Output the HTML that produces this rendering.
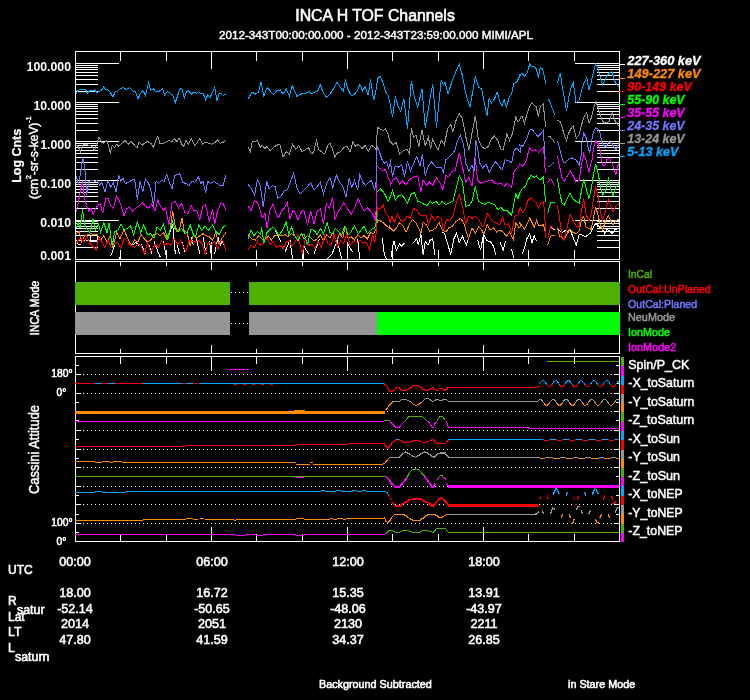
<!DOCTYPE html>
<html><head><meta charset="utf-8"><title>INCA H TOF Channels</title>
<style>
html,body{margin:0;padding:0;background:#000;}
body{width:750px;height:700px;overflow:hidden;}
svg{display:block;font-family:"Liberation Sans",sans-serif;will-change:transform;}
svg rect{shape-rendering:crispEdges;}
</style></head><body>
<svg width="750" height="700" viewBox="0 0 750 700">
<text x="295.3" y="21" font-size="16.4" text-anchor="start" fill="#fff" stroke="#fff" stroke-width="0.6" font-weight="normal" font-style="normal" id="title" textLength="159.5" lengthAdjust="spacingAndGlyphs">INCA H TOF Channels</text>
<text x="219" y="38.5" font-size="11.5" text-anchor="start" fill="#fff" stroke="#fff" stroke-width="0.45" font-weight="normal" font-style="normal" id="subtitle" textLength="314" lengthAdjust="spacingAndGlyphs">2012-343T00:00:00.000 - 2012-343T23:59:00.000 MIMI/APL</text>
<rect x="75" y="51" width="545" height="1" fill="#fff"/>
<rect x="75" y="259" width="545" height="1" fill="#fff"/>
<rect x="75" y="51" width="1" height="209" fill="#fff"/>
<rect x="619" y="51" width="1" height="209" fill="#fff"/>
<rect x="120" y="51" width="1" height="10" fill="#fff"/>
<rect x="120" y="250" width="1" height="10" fill="#fff"/>
<rect x="166" y="51" width="1" height="10" fill="#fff"/>
<rect x="166" y="250" width="1" height="10" fill="#fff"/>
<rect x="211" y="51" width="1" height="18" fill="#fff"/>
<rect x="211" y="242" width="1" height="18" fill="#fff"/>
<rect x="256" y="51" width="1" height="10" fill="#fff"/>
<rect x="256" y="250" width="1" height="10" fill="#fff"/>
<rect x="302" y="51" width="1" height="10" fill="#fff"/>
<rect x="302" y="250" width="1" height="10" fill="#fff"/>
<rect x="347" y="51" width="1" height="18" fill="#fff"/>
<rect x="347" y="242" width="1" height="18" fill="#fff"/>
<rect x="392" y="51" width="1" height="10" fill="#fff"/>
<rect x="392" y="250" width="1" height="10" fill="#fff"/>
<rect x="438" y="51" width="1" height="10" fill="#fff"/>
<rect x="438" y="250" width="1" height="10" fill="#fff"/>
<rect x="483" y="51" width="1" height="18" fill="#fff"/>
<rect x="483" y="242" width="1" height="18" fill="#fff"/>
<rect x="528" y="51" width="1" height="10" fill="#fff"/>
<rect x="528" y="250" width="1" height="10" fill="#fff"/>
<rect x="574" y="51" width="1" height="10" fill="#fff"/>
<rect x="574" y="250" width="1" height="10" fill="#fff"/>
<rect x="75" y="63" width="44" height="1" fill="#fff"/>
<rect x="575" y="63" width="44" height="1" fill="#fff"/>
<rect x="75" y="91" width="23" height="1" fill="#fff"/>
<rect x="597" y="91" width="22" height="1" fill="#fff"/>
<rect x="75" y="84" width="23" height="1" fill="#fff"/>
<rect x="597" y="84" width="22" height="1" fill="#fff"/>
<rect x="75" y="79" width="23" height="1" fill="#fff"/>
<rect x="597" y="79" width="22" height="1" fill="#fff"/>
<rect x="75" y="75" width="23" height="1" fill="#fff"/>
<rect x="597" y="75" width="22" height="1" fill="#fff"/>
<rect x="75" y="72" width="23" height="1" fill="#fff"/>
<rect x="597" y="72" width="22" height="1" fill="#fff"/>
<rect x="75" y="69" width="23" height="1" fill="#fff"/>
<rect x="597" y="69" width="22" height="1" fill="#fff"/>
<rect x="75" y="67" width="23" height="1" fill="#fff"/>
<rect x="597" y="67" width="22" height="1" fill="#fff"/>
<rect x="75" y="65" width="23" height="1" fill="#fff"/>
<rect x="597" y="65" width="22" height="1" fill="#fff"/>
<rect x="75" y="102" width="44" height="1" fill="#fff"/>
<rect x="575" y="102" width="44" height="1" fill="#fff"/>
<rect x="75" y="130" width="23" height="1" fill="#fff"/>
<rect x="597" y="130" width="22" height="1" fill="#fff"/>
<rect x="75" y="123" width="23" height="1" fill="#fff"/>
<rect x="597" y="123" width="22" height="1" fill="#fff"/>
<rect x="75" y="118" width="23" height="1" fill="#fff"/>
<rect x="597" y="118" width="22" height="1" fill="#fff"/>
<rect x="75" y="114" width="23" height="1" fill="#fff"/>
<rect x="597" y="114" width="22" height="1" fill="#fff"/>
<rect x="75" y="111" width="23" height="1" fill="#fff"/>
<rect x="597" y="111" width="22" height="1" fill="#fff"/>
<rect x="75" y="108" width="23" height="1" fill="#fff"/>
<rect x="597" y="108" width="22" height="1" fill="#fff"/>
<rect x="75" y="106" width="23" height="1" fill="#fff"/>
<rect x="597" y="106" width="22" height="1" fill="#fff"/>
<rect x="75" y="104" width="23" height="1" fill="#fff"/>
<rect x="597" y="104" width="22" height="1" fill="#fff"/>
<rect x="75" y="141" width="44" height="1" fill="#fff"/>
<rect x="575" y="141" width="44" height="1" fill="#fff"/>
<rect x="75" y="169" width="23" height="1" fill="#fff"/>
<rect x="597" y="169" width="22" height="1" fill="#fff"/>
<rect x="75" y="162" width="23" height="1" fill="#fff"/>
<rect x="597" y="162" width="22" height="1" fill="#fff"/>
<rect x="75" y="157" width="23" height="1" fill="#fff"/>
<rect x="597" y="157" width="22" height="1" fill="#fff"/>
<rect x="75" y="153" width="23" height="1" fill="#fff"/>
<rect x="597" y="153" width="22" height="1" fill="#fff"/>
<rect x="75" y="150" width="23" height="1" fill="#fff"/>
<rect x="597" y="150" width="22" height="1" fill="#fff"/>
<rect x="75" y="147" width="23" height="1" fill="#fff"/>
<rect x="597" y="147" width="22" height="1" fill="#fff"/>
<rect x="75" y="145" width="23" height="1" fill="#fff"/>
<rect x="597" y="145" width="22" height="1" fill="#fff"/>
<rect x="75" y="143" width="23" height="1" fill="#fff"/>
<rect x="597" y="143" width="22" height="1" fill="#fff"/>
<rect x="75" y="180" width="44" height="1" fill="#fff"/>
<rect x="575" y="180" width="44" height="1" fill="#fff"/>
<rect x="75" y="208" width="23" height="1" fill="#fff"/>
<rect x="597" y="208" width="22" height="1" fill="#fff"/>
<rect x="75" y="201" width="23" height="1" fill="#fff"/>
<rect x="597" y="201" width="22" height="1" fill="#fff"/>
<rect x="75" y="196" width="23" height="1" fill="#fff"/>
<rect x="597" y="196" width="22" height="1" fill="#fff"/>
<rect x="75" y="192" width="23" height="1" fill="#fff"/>
<rect x="597" y="192" width="22" height="1" fill="#fff"/>
<rect x="75" y="189" width="23" height="1" fill="#fff"/>
<rect x="597" y="189" width="22" height="1" fill="#fff"/>
<rect x="75" y="186" width="23" height="1" fill="#fff"/>
<rect x="597" y="186" width="22" height="1" fill="#fff"/>
<rect x="75" y="184" width="23" height="1" fill="#fff"/>
<rect x="597" y="184" width="22" height="1" fill="#fff"/>
<rect x="75" y="182" width="23" height="1" fill="#fff"/>
<rect x="597" y="182" width="22" height="1" fill="#fff"/>
<rect x="75" y="220" width="44" height="1" fill="#fff"/>
<rect x="575" y="220" width="44" height="1" fill="#fff"/>
<rect x="75" y="247" width="23" height="1" fill="#fff"/>
<rect x="597" y="247" width="22" height="1" fill="#fff"/>
<rect x="75" y="240" width="23" height="1" fill="#fff"/>
<rect x="597" y="240" width="22" height="1" fill="#fff"/>
<rect x="75" y="235" width="23" height="1" fill="#fff"/>
<rect x="597" y="235" width="22" height="1" fill="#fff"/>
<rect x="75" y="231" width="23" height="1" fill="#fff"/>
<rect x="597" y="231" width="22" height="1" fill="#fff"/>
<rect x="75" y="228" width="23" height="1" fill="#fff"/>
<rect x="597" y="228" width="22" height="1" fill="#fff"/>
<rect x="75" y="226" width="23" height="1" fill="#fff"/>
<rect x="597" y="226" width="22" height="1" fill="#fff"/>
<rect x="75" y="223" width="23" height="1" fill="#fff"/>
<rect x="597" y="223" width="22" height="1" fill="#fff"/>
<rect x="75" y="221" width="23" height="1" fill="#fff"/>
<rect x="597" y="221" width="22" height="1" fill="#fff"/>
<text x="71" y="70.7" font-size="12.3" text-anchor="end" fill="#fff" font-weight="bold" font-style="normal" >100.000</text>
<text x="71" y="109.75" font-size="12.3" text-anchor="end" fill="#fff" font-weight="bold" font-style="normal" >10.000</text>
<text x="71" y="148.79999999999998" font-size="12.3" text-anchor="end" fill="#fff" font-weight="bold" font-style="normal" >1.000</text>
<text x="71" y="187.85" font-size="12.3" text-anchor="end" fill="#fff" font-weight="bold" font-style="normal" >0.100</text>
<text x="71" y="226.9" font-size="12.3" text-anchor="end" fill="#fff" font-weight="bold" font-style="normal" >0.010</text>
<text x="71" y="260" font-size="12.3" text-anchor="end" fill="#fff" font-weight="bold" font-style="normal" >0.001</text>
<text transform="translate(20.6,182.8) rotate(-90)" font-size="13.4" fill="#fff" stroke="#fff" stroke-width="0.25" font-weight="bold" textLength="54" lengthAdjust="spacingAndGlyphs">Log Cnts</text>
<text transform="translate(38,199) rotate(-90)" font-size="12.2" fill="#fff" stroke="#fff" stroke-width="0.4" textLength="82.5" lengthAdjust="spacingAndGlyphs">(cm<tspan font-size="7" dy="-7">2</tspan><tspan dy="7">-sr-s-keV)</tspan><tspan font-size="7" dy="-7">-1</tspan></text>
<rect x="619" y="64" width="6" height="1" fill="#ffffff"/>
<text x="627.3" y="64.8" font-size="12.4" text-anchor="start" fill="#ffffff" stroke="#ffffff" stroke-width="0.3" font-weight="bold" font-style="italic" textLength="73.3" lengthAdjust="spacingAndGlyphs">227-360 keV</text>
<rect x="619" y="78" width="6" height="1" fill="#ff8c00"/>
<text x="627.3" y="77.9" font-size="12.4" text-anchor="start" fill="#ff8c00" stroke="#ff8c00" stroke-width="0.3" font-weight="bold" font-style="italic" textLength="73.3" lengthAdjust="spacingAndGlyphs">149-227 keV</text>
<rect x="619" y="91" width="6" height="1" fill="#ff0000"/>
<text x="627.3" y="91.0" font-size="12.4" text-anchor="start" fill="#ff0000" stroke="#ff0000" stroke-width="0.3" font-weight="bold" font-style="italic" textLength="64.4" lengthAdjust="spacingAndGlyphs">90-149 keV</text>
<rect x="619" y="104" width="6" height="1" fill="#00ff00"/>
<text x="627.3" y="104.0" font-size="12.4" text-anchor="start" fill="#00ff00" stroke="#00ff00" stroke-width="0.3" font-weight="bold" font-style="italic" textLength="57.3" lengthAdjust="spacingAndGlyphs">55-90 keV</text>
<rect x="619" y="117" width="6" height="1" fill="#ff00ff"/>
<text x="627.3" y="117.1" font-size="12.4" text-anchor="start" fill="#ff00ff" stroke="#ff00ff" stroke-width="0.3" font-weight="bold" font-style="italic" textLength="57.3" lengthAdjust="spacingAndGlyphs">35-55 keV</text>
<rect x="619" y="130" width="6" height="1" fill="#7078ff"/>
<text x="627.3" y="130.2" font-size="12.4" text-anchor="start" fill="#7078ff" stroke="#7078ff" stroke-width="0.3" font-weight="bold" font-style="italic" textLength="57.3" lengthAdjust="spacingAndGlyphs">24-35 keV</text>
<rect x="619" y="143" width="6" height="1" fill="#969696"/>
<text x="627.3" y="143.3" font-size="12.4" text-anchor="start" fill="#969696" stroke="#969696" stroke-width="0.3" font-weight="bold" font-style="italic" textLength="57.3" lengthAdjust="spacingAndGlyphs">13-24 keV</text>
<rect x="619" y="156" width="6" height="1" fill="#00a8ff"/>
<text x="627.3" y="156.4" font-size="12.4" text-anchor="start" fill="#00a8ff" stroke="#00a8ff" stroke-width="0.3" font-weight="bold" font-style="italic" textLength="51" lengthAdjust="spacingAndGlyphs">5-13 keV</text>
<clipPath id="c1"><rect x="76" y="52" width="543" height="207"/></clipPath>
<g clip-path="url(#c1)" fill="none" stroke-width="1" stroke-linejoin="miter" shape-rendering="crispEdges">
<polyline stroke="#ffffff" points="76.9,243.4 79.1,244.9 81,244.5"/>
<polyline stroke="#ffffff" points="90.6,241.5 90.6,235.5 97.4,235.5 97.4,241.5 91,241.5"/>
<polyline stroke="#ffffff" points="110.2,256 112.3,252.8 114.5,245.3"/>
<polyline stroke="#ffffff" points="119.8,259.2 120.9,249.6"/>
<polyline stroke="#ffffff" points="132.6,245.3 135.8,242.1 139,245.3"/>
<polyline stroke="#ffffff" points="141.1,244.3 145.4,253.9"/>
<polyline stroke="#ffffff" points="148.6,244.3 151.8,253.9"/>
<polyline stroke="#ffffff" points="153.9,241.1 157.1,249.6 160.3,257.1"/>
<polyline stroke="#ffffff" points="163.5,241.1 166.7,259.2"/>
<polyline stroke="#ffffff" points="169.9,232.5 172.7,224 175.3,253.9"/>
<polyline stroke="#ffffff" points="177.4,245.3 179.5,253.9"/>
<polyline stroke="#ffffff" points="181.7,241.1 184.9,251.7"/>
<polyline stroke="#ffffff" points="191.3,236.8 193.4,245.3"/>
<polyline stroke="#ffffff" points="196.6,238.9 199.8,253.9"/>
<polyline stroke="#ffffff" points="203,236.8 206.2,253.9"/>
<polyline stroke="#ffffff" points="209.4,241.1 211.5,256"/>
<polyline stroke="#ffffff" points="214.7,253.9 217.9,236.8 220.1,245.3 222.2,241.1 224.3,245.3"/>
<polyline stroke="#ffffff" points="256.3,259.2 256.3,249.6"/>
<polyline stroke="#ffffff" points="275.5,231.5 277.7,234.7 280.9,242.1"/>
<polyline stroke="#ffffff" points="285.1,251.7 290,240 292.6,259.2"/>
<polyline stroke="#ffffff" points="303.3,259.2 303.3,245.3 308.6,253.9"/>
<polyline stroke="#ffffff" points="313.9,253.9 317.1,245.3 319.3,238.9"/>
<polyline stroke="#ffffff" points="326.7,259.2 332.1,253.9 335.3,245.3 337.4,241.1 341.7,259.2"/>
<polyline stroke="#ffffff" points="347,259.2 348.1,244.3 352.3,251.7"/>
<polyline stroke="#ffffff" points="357.7,238.9 359.8,259.2"/>
<polyline stroke="#ffffff" points="382.2,237.9 384.3,253.9 386.5,259.2"/>
<polyline stroke="#ffffff" points="391.1,256.7 393.8,240.7 396.4,250.3 399.6,243.9 401.7,246 404.5,242.8"/>
<polyline stroke="#ffffff" points="413.5,242.8 416.7,238.5 418.2,244.9 420.9,234.3 423.1,254.5 425.2,241.7 428,244.9 430.5,239.6 432.7,238.5 434.8,254.5"/>
<polyline stroke="#ffffff" points="438,250.3 438.6,260.1"/>
<polyline stroke="#ffffff" points="442.3,232.1 444.4,233.2 447.6,243.9 450.8,254.5 454,238.5 456.6,233.2 459.3,242.8 462.5,236.4 466.4,244.9 468.5,238.5"/>
<polyline stroke="#ffffff" points="477.5,239.6 480.7,250.3 483.4,234.3 483.9,260.1"/>
<polyline stroke="#ffffff" points="483.9,235.3 487.1,240.7 490.3,241.7 493.5,246 495.6,254.5"/>
<polyline stroke="#ffffff" points="499.9,241.7 503.1,250.3 505.6,240.7"/>
<polyline stroke="#ffffff" points="511.6,249.2 513.7,257.7"/>
<polyline stroke="#ffffff" points="522.2,254 524.5,248 526.7,239 529.7,233.7 532,242.7 534.2,236 536.5,241.2"/>
<polyline stroke="#ffffff" points="550.7,227 554.5,230"/>
<polyline stroke="#ffffff" points="557.5,229.2 559.7,230.7 562.7,232.2 565,230.7 567.2,231.5 570.2,229.2 572.5,236 576.2,245 579.2,234.5 581.5,234.5 583.7,236 586.7,236 590.5,233 593.5,227 595.7,223.2 598,225.5 600.2,227.7 602.5,228.5 604.7,233.7 607,229.2 610,231.5 612.2,233.7 614.5,230 616.7,229.2 619,228.5"/>
<polyline stroke="#ff8c00" points="76.1,233.6 79.3,231.5 81.4,242.1 84.6,235.7 87.8,234.7 91,233.6 94.2,234.7 97.4,234.7 100.6,240 103.8,235.7 107,242.1 110.2,235.7 113.4,245.3 116.6,232.5 119.8,238.9 124.1,229.3 127.3,237.9 131.5,245.3 134.7,240 137.9,242.1 141.1,234.7 144.3,238.9 147.5,242.1 150.7,240 153.9,234.7 157.1,233.6 160.3,235.7 163.5,232.5 166.7,238.9 169.9,230.4 172.7,211.2 174.8,224 177,231.5 179.5,229.3 182.1,217.6 184.2,231.5 187,232.5 190.2,245.3 193.4,234.7 196.6,237.9 199.8,235.7 203,233.6 206.2,235.7 209.4,236.8 212.6,240 215.8,232.5 219,244.3 222.2,237.9 225.8,232.5"/>
<polyline stroke="#ff8c00" points="248.2,234.7 251.6,238.9 255.3,240 258.5,235.7 261.7,238.9 264.9,241.1 268.1,235.7 271.3,240 274.5,235.7 277.7,234.7 280.9,235.7 285.1,234.7 288.3,236.8 291.5,233.6 294.7,235.7 297.9,241.1 301.1,233.6 304.3,238.9 307.5,235.7 310.7,237.9 313.9,241.1 317.1,238.9 320.3,234.7 323.5,241.1 326.7,234.7 329.9,237.9 333.1,232.5 336.3,242.1 339.5,233.6 342.7,237.9 345.5,226.1 348.1,237.9 351.3,236.8 354.5,240 357.7,234.7 360.9,237.9 364.1,235.7 367.3,238.9 370.5,232.5 373.7,233.6 376.2,228.3 377.5,219.7 380.1,220.8 383.3,222.9 386.5,226.1 390.1,228.3 390,226.8 393.2,231.1 396.4,227.9 399.6,222.5 402.8,225.7 406,232.1 409.2,224.7 412.4,219.3 415.6,222.5 418.8,228.9 420.9,233.2 423.1,222.5 426.3,224.7 429.5,231.1 432.7,230 435.9,227.9 439.1,222.5 442.3,230 445.9,232.1 448.7,227.9 451.9,226.8 456.1,221.5 460.4,218.3 463.6,222.5 466.4,232.1 468.5,238.5 472.1,227.9 475.3,233.2 478.5,226.8 481.7,230 483.9,234.3 487.1,224.7 490.3,230 493.5,227.9 496.7,232.1 499.9,230 503.1,232.1 506.3,236.4 509.5,232.1 513.3,239.6 515.9,222.5 519.1,227.9 520.1,226.8 520,223.2 522.2,226.2 524.5,229.2 527.5,223.2 529.7,218 532,222.5 534.2,227 536.5,220.2 538.7,225.5 541,225.5 543.5,224.7 544.7,229.2 545.8,236.7"/>
<polyline stroke="#ff8c00" points="547.7,245 550.7,236 554.5,235.2"/>
<polyline stroke="#ff8c00" points="557.5,228.5 559.7,236 562,238.2 564.2,239 567.2,233.7 570.2,229.2 572.5,232.2 576.2,233.7 579.2,230.7 581.5,219.5 583.7,216.5 586,227 589,228.5 591.2,229.2 593.5,218 595.7,206.7 598,215 600.2,224.7 602.5,230 605.5,221 608.5,215.7 610.7,221 613,224.7 616,220.2 619,219.5"/>
<polyline stroke="#ff0000" points="76.1,244.3 78.2,240 81.4,238.9 84.6,242.1 86.7,235.7 89.9,243.2 93.1,246.4 96.3,249.6 98.5,237.9 101.7,241.1 104.9,247.5 108.1,240 111.3,247.5 114.5,244.3 117.7,242.1 120.9,248.5 124.1,237.9 127.3,241.1 130.5,245.3 134.7,247.5 137.9,244.3 141.1,245.3 144.3,253.9 147.5,243.2 150.7,251.7 155,244.3 158.2,247.5 161.4,241.1 164.6,245.3 167.8,243.2 171,245.3 174.2,238.9 177.4,244.3 180.6,240 183.8,247.5 185.9,251.7 189.1,240 192.3,241.1 195.5,242.1 198.7,240 201.9,243.2 205.1,253.9 208.3,242.1 211.5,244.3 214.7,241.1 217.9,249.6 221.1,240 223.3,241.1 225.8,250.7"/>
<polyline stroke="#ff0000" points="248.2,249.6 251,245.3 254.2,247.5 257.4,241.1 260.6,245.3 263.8,243.2 267,237.9 270.2,244.3 273.4,242.1 276.6,247.5 279.8,245.3 283,248.5 286.2,242.1 289.4,240 291.5,246.4 294.7,243.2 297.9,234.7 302.2,253.9 305.4,238.9 308.6,245.3 311.8,244.3 315,248.5 318.2,241.1 321.4,247.5 324.6,235.7 327.8,243.2 331,245.3 334.2,234.7 337.4,247.5 340.6,241.1 343.8,243.2 347,233.6 350.2,245.3 353.4,241.1 356.6,243.2 359.8,240 363,243.2 366.2,242.1 369.4,249.6 372.6,234.7 374.7,243.2 376.2,232.5 377.5,208 380.1,209.1 383.3,204.8 385.4,213.3 388.2,216.5 390.1,221.9 390,222.5 392.1,216.1 394.3,222.5 397.5,214 400.7,220.4 403.9,221.5 407.1,216.1 410.3,218.3 413.5,208.7 416.7,209.7 419.9,215.1 423.1,216.1 426.3,215.1 428.4,224.7 431.6,215.1 434.8,220.4 438,216.1 441.2,218.3 443.3,230 446.5,219.3 449.7,221.5 452.9,216.1 456.1,203.3 459.3,194.8 462.5,206.5 465.7,223.6 468.9,216.1 472.1,218.3 475.3,216.1 478.5,219.3 481.7,225.7 483.9,226.8 487.1,212.9 490.3,218.3 493.5,221.5 496.7,223.6 499.9,224.7 502.6,217.2 505.2,225.7 508.4,223.6 511.6,233.2 514.8,216.1 518,215.1 520.1,207.6 520,206.7 523,212.7 526,206.7 528.2,200 531.2,197.7 534.2,201.5 536.5,202.2 538.3,208.2 541,203 543.5,201.5 544.7,215 545.8,236.7"/>
<polyline stroke="#ff0000" points="547.7,238.2 550.7,226.2 554.5,229.2"/>
<polyline stroke="#ff0000" points="557.5,205.2 559.7,219.5 562,236.7 564.2,239.7 567.2,227 570.2,214.2 572.5,219.5 576.2,226.2 579.2,227 581.5,210.5 583.7,198.5 586,214.2 589,221 591.2,214.2 593.5,198.5 595.7,186.5 598,195.5 600.2,210.5 602.5,220.2 605.5,212 608.5,198.5 610.7,206 613,212 616,206 619,203.7"/>
<polyline stroke="#00ff00" points="76.1,228.3 78.2,222.9 80.3,228.3 82.5,209.5 84.6,224 86.7,228.3 89.9,232.5 93.1,218.7 95.3,230.4 98.5,224 100.6,232.5 103.8,222.9 107,232.5 109.1,222.9 112.3,247.5 114.5,231.5 117.7,230.4 120.9,224 124.1,230.4 127.3,228.3 130.5,226.1 133.7,234.7 137.3,221.9 140.7,232.5 143.7,225.1 147.5,234.7 150.7,233.6 153.9,237.9 157.1,227.2 160.3,230.4 163.5,224 167.8,240 172.1,220.8 175.3,229.3 178.5,231.5 181.7,228.3 184.9,233.6 187,232.5 190.2,225.1 193.4,234.7 195.5,236.8 198.7,225.1 201.9,230.4 205.1,226.1 208.3,230.4 212.6,225.1 215.8,231.5 219,234.7 222.2,228.3 225.8,225.1"/>
<polyline stroke="#00ff00" points="248.2,238.9 251,230.4 254.2,235.7 257.4,231.5 260.6,234.7 261.7,227.2 263.8,243.2 267,232.5 270.2,229.3 273.4,227.2 276,230.4 278.7,235.7 281.9,231.5 286.2,221.9 288.8,234.7 291.5,227.2 294.7,235.7 297.9,240 301.1,233.6 304.3,234.7 307.5,245.3 310.7,229.3 314.4,230.4 317.1,234.7 320.3,228.3 323.5,233.6 327.2,222.9 329.9,232.5 332.7,233.6 335.3,228.3 338.5,231.5 341.7,234.7 344.9,226.1 348.1,234.7 351.3,231.5 354.5,226.1 358.3,233.6 360.9,230.4 364.1,226.1 367.3,233.6 371.5,229.3 374.7,228.3 376.2,221.9 376.9,192 380.1,188.8 383.3,192 385.4,195.2 388.2,201.6 390.1,197.3 390,198 392.6,190.5 395.3,200.1 398.5,195.9 401.7,194.8 404.5,198 407.5,203.3 411.3,193.7 414.5,192.7 417.7,201.2 420.9,202.3 424.1,204.4 427.3,205.5 430.1,201.2 432.7,203.3 435.9,201.2 439.1,205 442.3,201.2 445.5,204.4 448.7,203.3 452.9,201.2 456.1,188.4 459.3,175.6 462.5,182 465.7,206.5 468.9,205.5 472.1,201.2 475.3,186.3 478.5,201.2 481.7,203.3 484.9,204.4 488.1,202.3 491.3,203.3 494.5,204.4 497.7,209.7 500.9,207.6 504.1,210.8 507.3,210.8 511.6,215.1 515.9,193.7 518,199.1 520.1,191.6 520,192.5 522.2,188.7 525.2,186.5 528.2,179.7 531.2,175.2 534.2,177.5 536.5,176 538.7,179 541,179.7 543.5,176.7 544.7,194 545.8,202.2"/>
<polyline stroke="#00ff00" points="547.7,212.7 550.7,202.2 554.5,202.2"/>
<polyline stroke="#00ff00" points="557.5,178.2 559.7,192.5 562,203 564.2,205.2 567.2,198.5 570.2,193.2 572.5,198.5 576.2,201.5 579.2,203 581.5,191 583.7,179 586,188 589,198.5 591.2,188.7 593.5,174.5 595.7,164 598,173 600.2,185 602.5,195.5 605.5,191 608.5,177.5 610.7,188.7 613,195.5 616,187.2 619,183.5"/>
<polyline stroke="#ff00ff" points="76.1,212.3 78.2,202.7 80.3,192 82.5,181.3 84.6,198.4 86.7,205.9 88.9,211.2 91,208 93.1,214.4 95.3,209.1 97.4,205.9 100.2,203.7 102.7,213.3 105.9,198.4 108.1,198 110.8,205.9 113.4,208 116.6,196.3 118.7,199.5 120.9,204.8 124.1,215.9 126.2,209.1 129.4,206.9 132.6,211.2 135.8,208 139,205.9 142.8,202.7 145.4,206.5 148.6,208 151.8,203.7 155,211.2 157.8,200.1 160.3,205.9 163.5,210.1 165.7,208 168.9,225.1 172.1,202.7 175.3,201.6 178.5,208 181.7,203.7 184.9,212.3 188.1,213.3 191.3,205.9 194,211.2 196.6,210.1 199.8,219.7 203,205.9 205.6,204.8 209.4,221.9 212.6,209.1 214.7,224 217.5,211.2 221.1,202.7 223.3,203.7 225.8,210.1"/>
<polyline stroke="#ff00ff" points="248.2,205.9 251,211.2 254.6,200.5 257.4,202.7 260.2,210.1 262.3,217.6 264.9,213.3 267,228.3 269.6,211.2 273,203.7 276,213.3 278.7,217.6 281.5,211.2 284.5,208 287.3,202.7 290,218.7 293,210.1 295.8,214.4 297.9,219.7 301.1,212.3 303.7,210.1 307.5,225.1 310.7,211.2 313.9,224 317.1,211.2 320.3,209.1 323.5,224 326.3,203.7 329.3,208 332.7,197.3 334.8,219.7 337.8,212.3 340.6,208 343.8,202.7 347,208 351.3,214.4 354.5,208 358.3,198.4 361.3,205.9 364.1,211.2 367.3,208 370.5,211.2 373.7,215.5 375.8,221.9 376.9,166.4 380.1,168.5 383.3,170.7 385.4,169.6 388.2,177.1 390.1,181.3 390,186.3 393.2,179.9 396.4,177.7 399.6,184.1 402.8,180.9 406,185.2 409.2,179.9 412.4,177.7 415.2,176.7 417.7,175.6 420.9,191.6 423.1,179.9 426.3,185.2 429.5,182 432.7,185.2 436.5,177.7 439.5,182 442.9,189.5 445.9,175.6 448.7,176.7 451.9,171.3 455.1,170.3 459.3,153.2 462.5,167.1 465.7,182 468.9,177.7 472.1,186.3 475.3,158.5 477.5,179.9 480.7,183.1 483.9,182 488.1,180.9 491.3,179.9 494.5,183.1 497.7,184.1 500.9,183.1 504.1,186.3 507.3,183.1 511.6,187.3 514.2,171.3 516.9,168.1 520.1,164.9 520,164 522.2,166.2 524.5,164 526.7,159.9 528.2,152.5 529.7,148 532,151 535,149.5 538.7,152.5 541,150.2 543.5,147.2 544.7,164 545.5,173"/>
<polyline stroke="#ff00ff" points="547.7,182.7 550.7,178.2 554.5,185.7"/>
<polyline stroke="#ff00ff" points="557.5,156.5 559.7,167 562,177.5 564.2,181.2 566.5,177.5 570.2,170.7 572.5,174.5 576.2,182 579.2,180.5 581.5,164 582.7,159.9 583.7,154 586,159.9 589,171.5 591.2,162.5 592,159.9 593.5,148 595.7,141.2 598,143.5 600.2,151 601.7,159.9 602.5,165.5 604.7,166.2 607,159.5 609.2,158 611.5,161.7 613.7,168.5 616,174.5 618.2,164.7 619,164"/>
<polyline stroke="#7078ff" points="76.1,176.2 78.6,184.5 80.5,173.4 82.7,157.4 84.6,166.4 85.7,179 86.7,195.2 88.9,181.3 92.1,180.3 95.3,181.3 97.4,180.3 99.5,185.6 101.7,182.4 104.9,192 108.1,180.3 110.8,187.7 113.4,182.4 116,192 118.7,174.9 120.9,181.3 123,178.1 125.1,183.5 128.3,182.4 131.5,180.3 134.7,179.2 137.3,199.5 140.1,181.3 142.8,192 145.4,178.8 148.6,183.5 150.7,188.8 153.5,205.9 156.1,181.3 158.6,183.5 161.4,180.3 164.2,181.3 166.7,174.5 169.9,183.5 172.1,188.8 174.8,175.4 177.4,174.5 180,173.9 182.7,182.4 185.9,183.5 189.1,185.6 191.9,181.3 194.9,182.4 198.3,176.6 200.9,183.5 203,181.3 205.6,193.1 207.7,181.3 210.5,183.5 213.7,181.3 216.9,183.5 220.1,185.6 223.3,185.2 225.8,175.4"/>
<polyline stroke="#7078ff" points="248.2,184.5 251.6,188.8 254.6,195.2 257.4,179.6 260.2,185.6 263.2,206.9 266.6,181.3 269.1,188.8 272.3,185.6 275.1,186.7 277.7,198.4 280.9,196.3 284.1,190.9 287.3,189.9 290.5,181.3 293.7,173.2 296.9,187.7 300.1,194.1 303.3,190.9 307.5,186.7 310.7,182.4 313.9,189.9 317.1,186.7 320.3,182.4 323.5,194.1 326.7,183.5 329.9,177.1 332.7,187.7 336.3,174.9 339.5,182.4 342.7,185.6 345.9,197.3 349.1,178.1 351.9,187.7 354.5,180.3 357.7,189.9 359.8,174.9 363,182.4 365.6,185.6 368.3,182.4 371.5,180.3 374.7,189.9 376.2,181.3 376.9,151.5 377.5,146.3 380.1,153.8 382.2,160 384.3,163.2 386.5,161.7 388.6,167.5 390.1,164.3 390,158.5 392.6,176.7 395.3,166 398.5,167.1 401.7,164.9 404.5,176.7 407.5,160.7 410.3,171.3 413.5,163.9 416.7,156.4 419.9,166 422.4,154.3 425.2,175.6 428.4,166 431.6,161.7 434.8,166 438,168.1 441.2,167.1 443.3,172.4 445.9,159.6 448.7,157.5 451.9,154.3 455.1,150 457.2,141.5 460.4,135.1 463.6,144.7 465.7,162.8 468.9,171.3 472.1,164.9 474.3,171.3 475.8,140.4 477.9,150 479.6,162.8 482.8,168.1 486,163.9 489.2,172.4 492.4,166 495.6,161.7 498.8,166 502,170.3 505.2,159.6 508.4,160.7 511.6,162.8 514.2,150 516.9,147.9 520.1,152.1 520,145 522.2,146.5 524.5,143.5 527.5,136.7 529.7,130 532,129.2 535,133 538,136.7 541,133.7 543.5,130 544.7,155 545.5,159.5"/>
<polyline stroke="#7078ff" points="547.7,167 550.7,165.5 554.5,161.8"/>
<polyline stroke="#7078ff" points="557.5,141.2 559.7,148.7 561.2,155 563.5,162.5 566.5,161.8 569.5,158.8 572.5,158 576.2,160.3 579.2,164.8 581.2,155 581.5,145 583.7,133 586,137.5 588.2,148 589.7,152.5 592,139 593.5,132.2 595.7,127.7 598,129.2 600.2,133 601.7,142 604,145.7 606.2,147.2 608.5,142 611.5,143.5 613.7,146.5 616,150.2 618.2,145 619,144.2"/>
<polyline stroke="#969696" points="76.1,145.3 78.2,146.4 80.3,151.7 82.5,145.3 85.7,144.3 92.1,146.4 94.2,150.7 96.3,145.3 98.9,137.2 101.7,142.1 103.8,143.2 107,140.6 110.2,152.8 112.3,145.3 114.5,147.5 116.6,144.3 118.7,146.4 121.9,143.2 125.1,140.6 128.3,144.3 130.9,141.1 133.7,144.3 136.9,147.9 139,142.1 142.2,145.3 144.3,143.2 147.5,141.5 150.7,143.2 153.5,147 155.6,141.1 157.8,136.4 159.9,143.2 162.5,143.6 165.7,142.1 168.9,140.6 172.1,141.5 174.2,138.5 177,141.5 179.1,137.9 181.7,144.3 183.8,146.4 185.9,140 188.1,144.3 191.3,138.5 194.5,145.3 196.6,143.6 199.8,138.5 202.6,144.3 205.1,142.1 208.3,143.2 211.5,144.3 214.7,142.8 217.5,140 220.1,143.2 223.3,142.1 225.8,140.4"/>
<polyline stroke="#969696" points="248.2,147.5 250.4,151.7 252.1,142.1 255.3,141.1 257.4,140.6 260.2,147.5 262.3,145.3 264.9,148.5 267,146.4 270.2,150.7 273.4,147.5 276.6,145.3 279.8,144.3 283,157.1 286.2,151.7 289.4,153.9 292.6,144.3 295.8,149.6 298.6,145.3 302.2,151.7 305.4,149.6 308.6,147.5 311.4,153.9 313.9,151.7 316.5,139.4 318.6,149.6 321.4,151.7 324.6,153.9 327.8,145.3 329.9,143.2 332.7,149.6 334.8,157.1 337.4,152.8 340.6,151.7 343.8,147.5 347,146.4 350.2,151.7 352.8,142.1 355.5,146.4 358.7,144.3 361.9,148.5 365.1,145.3 368.3,151.7 371.5,145.3 374.7,147.5 376.2,149.6 377.5,127.2 380.1,129.3 383.3,130.4 385.4,128.7 388.2,134.7 390.1,142.1 390,141.4 393.2,144.6 396.4,142.5 399.6,154.2 402.8,151 407.1,148.9 409.6,154.2 411.3,128.6 413.5,137.1 416,135 418.8,146.7 422,129.7 425.2,145.7 428.4,137.1 430.5,148.9 432.7,139.3 435.9,145.7 438,149.9 441.2,140.3 444.4,144.6 447.6,128.6 450.8,124.3 452.9,131.8 456.1,120.1 459.3,113.7 462.5,119 465.7,136.1 468.9,149.9 472.1,132.9 475.3,115.8 478.5,140.3 481.7,146.7 484.9,148.9 488.1,146.7 491.3,139.3 494.5,136.1 497.7,140.3 500.9,148.9 503.1,149.9 506.9,133.9 509.5,140.3 512.7,132.9 515.9,116.9 518,122.2 520.1,119 520,117.2 522.2,116.5 524.5,123.2 526.7,115 529,108.2 531.7,103 534.2,105.2 536.2,106.7 538.3,116.5 540.2,106.7 543.2,103.7 544.7,118 545.8,127"/>
<polyline stroke="#969696" points="547.7,136 550,136.7 552.2,139 554.5,142.7"/>
<polyline stroke="#969696" points="557.5,120.2 560.2,121.7 562,127 564.2,134.5 566.5,140.5 568.7,133 571,128.5 573.2,125.5 576.2,138.2 579.2,134.5 581.5,125.5 583.7,117.2 586.7,112.7 589,123.2 591.2,118 593.5,109 595.7,102.2 598,107.5 600.2,115 602.5,121 604.7,123.2 607,122.5 609.2,121.7 612.2,112.7 614.5,119.5 616.7,124 619,125.5"/>
<polyline stroke="#00a8ff" points="76.1,94.1 77.6,90.9 80.3,89.4 85.2,89.2 87.4,93.1 89.5,90.9 92.1,90.3 94.6,89.9 97,92.4 98.9,91.6 101.7,89.9 103.8,86.7 105.3,89.9 107,88.8 110.2,92 113,97.3 114.9,92 117.7,91.6 120.2,88.8 123,87.3 126.2,89.4 130,87.7 133,90.9 135.8,92 137.9,99 140.1,94.1 142.8,90.3 145.4,95.2 148.6,83 150.7,89.9 153.5,88.8 155.6,91.6 158.6,92 162.5,88.4 164.6,95.2 167.2,91.6 169.9,93.1 172.7,95.2 175.3,102.7 177.4,96.3 179.5,89.9 181.7,88.2 184.2,98 186.4,92 188.5,90.9 191.3,94.1 193.4,92 196.6,93.1 198.7,91.6 200.9,94.1 203,93.1 205.6,99.5 207.7,95.2 209.8,98 212.6,92 214.7,87.3 216.9,100.5 219,94.1 221.1,93.1 223.3,95.2 225.8,94.1"/>
<polyline stroke="#00a8ff" points="248.2,98.8 252.1,92 255.3,94.1 258.5,92 261,82.4 263.8,96.3 267,87.7 270.2,90.9 273.4,94.6 276.6,90.9 280.2,89.9 283,94.1 286.2,88.8 289.4,96.3 292.2,85.6 296.9,96.3 301.1,94.1 305.4,93.1 309.2,91.6 311.4,93.7 315,92 317.8,90.9 320.3,84.5 322.9,92 326.3,97.3 329.9,94.1 332.7,89.9 335.3,85.6 337,82.4 340.6,87.7 343.4,90.9 345.5,79.6 348.1,89.9 351.3,95.8 354.5,94.1 357.7,89.9 359.8,84.5 362.6,90.9 365.1,86.7 368.3,95.2 370.5,79.2 373.7,100.1 375.8,92 377.5,79.2 380.1,76 383.3,83.5 385.4,92 388.2,95.2 390.1,103.7 390,104.1 392.6,116.9 395.3,96.6 398.1,106.2 400.7,111.5 403.9,98.7 407.5,128.6 411.3,80.6 414.5,97.7 417.7,107.3 422,89.1 425.2,127.5 428.4,108.3 432.7,83.8 436.5,127.5 441.2,80.6 443.3,84.9 445,82.3 448,93.8 451.9,81.7 456.1,71 459.3,64.6 462.5,76.3 465.7,93.4 470,107.3 475.3,76.3 478.5,87 481.7,89.1 484.9,105.1 487.1,115.8 489.2,97.7 491.3,103 494.5,98.7 497.1,92.3 499.9,101.9 502,106.2 504.1,99.8 506.3,107.3 509.5,96.6 511.6,94.5 513.7,83.8 516.9,81.7 520.1,75.3 520,74.5 522.2,73.7 524.5,76 527.2,73 529.7,64 532,67 534.2,66.2 536.5,69.2 538.3,77.5 540.2,67.7 542.5,68.5 544.7,78.2 545.8,84.2"/>
<polyline stroke="#00a8ff" points="547.7,98.5 550,102.2 552.2,108.2 554.8,115"/>
<polyline stroke="#00a8ff" points="557.5,82.7 560.2,73 562,85 564.2,97 566.5,111.2 568.7,97.7 571,88 573.2,82.7 576.2,103 579.2,100 581.5,91 583.7,83.5 586.7,77.5 589,90.2 591.2,82 593.5,71.5 595.7,64 598,69.2 600.2,76.7 602.5,85 605.5,79 608.5,73.7 611.8,71.5 614.5,80.5 616.7,85 619,86.5"/>
</g>
<rect x="75" y="261" width="545" height="1" fill="#fff"/>
<rect x="75" y="353" width="545" height="1" fill="#fff"/>
<rect x="75" y="261" width="1" height="93" fill="#fff"/>
<rect x="619" y="261" width="1" height="93" fill="#fff"/>
<rect x="120" y="261" width="1" height="5" fill="#fff"/>
<rect x="120" y="349" width="1" height="5" fill="#fff"/>
<rect x="166" y="261" width="1" height="5" fill="#fff"/>
<rect x="166" y="349" width="1" height="5" fill="#fff"/>
<rect x="211" y="261" width="1" height="9" fill="#fff"/>
<rect x="211" y="345" width="1" height="9" fill="#fff"/>
<rect x="256" y="261" width="1" height="5" fill="#fff"/>
<rect x="256" y="349" width="1" height="5" fill="#fff"/>
<rect x="302" y="261" width="1" height="5" fill="#fff"/>
<rect x="302" y="349" width="1" height="5" fill="#fff"/>
<rect x="347" y="261" width="1" height="9" fill="#fff"/>
<rect x="347" y="345" width="1" height="9" fill="#fff"/>
<rect x="392" y="261" width="1" height="5" fill="#fff"/>
<rect x="392" y="349" width="1" height="5" fill="#fff"/>
<rect x="438" y="261" width="1" height="5" fill="#fff"/>
<rect x="438" y="349" width="1" height="5" fill="#fff"/>
<rect x="483" y="261" width="1" height="9" fill="#fff"/>
<rect x="483" y="345" width="1" height="9" fill="#fff"/>
<rect x="528" y="261" width="1" height="5" fill="#fff"/>
<rect x="528" y="349" width="1" height="5" fill="#fff"/>
<rect x="574" y="261" width="1" height="5" fill="#fff"/>
<rect x="574" y="349" width="1" height="5" fill="#fff"/>
<rect x="75" y="282" width="155" height="23" fill="#4eb000"/>
<rect x="249" y="282" width="371" height="23" fill="#4eb000"/>
<rect x="75" y="312" width="155" height="23" fill="#969696"/>
<rect x="249" y="312" width="128" height="23" fill="#969696"/>
<rect x="377" y="312" width="243" height="23" fill="#00ff00"/>
<line x1="231" y1="292.5" x2="248" y2="292.5" stroke="#fff" stroke-width="1" stroke-dasharray="1 3" shape-rendering="crispEdges"/>
<line x1="231" y1="323.5" x2="248" y2="323.5" stroke="#fff" stroke-width="1" stroke-dasharray="1 3" shape-rendering="crispEdges"/>
<text transform="translate(38.6,335.3) rotate(-90)" font-size="12" fill="#fff" stroke="#fff" stroke-width="0.45" textLength="54.6" lengthAdjust="spacingAndGlyphs">INCA Mode</text>
<text x="628" y="277.8" font-size="10.4" text-anchor="start" fill="#4eb000" stroke="#4eb000" stroke-width="0.5" font-weight="normal" font-style="normal" textLength="24" lengthAdjust="spacingAndGlyphs">InCal</text>
<text x="628" y="292.9" font-size="10.4" text-anchor="start" fill="#ff0000" stroke="#ff0000" stroke-width="0.5" font-weight="normal" font-style="normal" textLength="82.7" lengthAdjust="spacingAndGlyphs">OutCal:UnPlaned</text>
<text x="628" y="308.2" font-size="10.4" text-anchor="start" fill="#7078ff" stroke="#7078ff" stroke-width="0.5" font-weight="normal" font-style="normal" textLength="69.2" lengthAdjust="spacingAndGlyphs">OutCal:Planed</text>
<text x="628" y="320.7" font-size="10.4" text-anchor="start" fill="#969696" stroke="#969696" stroke-width="0.5" font-weight="normal" font-style="normal" textLength="47" lengthAdjust="spacingAndGlyphs">NeuMode</text>
<text x="628" y="335.8" font-size="10.4" text-anchor="start" fill="#00ff00" stroke="#00ff00" stroke-width="0.5" font-weight="normal" font-style="normal" textLength="42" lengthAdjust="spacingAndGlyphs">IonMode</text>
<text x="628" y="351.1" font-size="10.4" text-anchor="start" fill="#ff00ff" stroke="#ff00ff" stroke-width="0.5" font-weight="normal" font-style="normal" textLength="48.3" lengthAdjust="spacingAndGlyphs">IonMode2</text>
<rect x="75" y="356" width="545" height="1" fill="#fff"/>
<rect x="75" y="541" width="545" height="1" fill="#fff"/>
<rect x="75" y="356" width="1" height="186" fill="#fff"/>
<rect x="619" y="356" width="1" height="186" fill="#fff"/>
<rect x="120" y="356" width="1" height="8" fill="#fff"/>
<rect x="120" y="534" width="1" height="8" fill="#fff"/>
<rect x="166" y="356" width="1" height="8" fill="#fff"/>
<rect x="166" y="534" width="1" height="8" fill="#fff"/>
<rect x="211" y="356" width="1" height="15" fill="#fff"/>
<rect x="211" y="527" width="1" height="15" fill="#fff"/>
<rect x="256" y="356" width="1" height="8" fill="#fff"/>
<rect x="256" y="534" width="1" height="8" fill="#fff"/>
<rect x="302" y="356" width="1" height="8" fill="#fff"/>
<rect x="302" y="534" width="1" height="8" fill="#fff"/>
<rect x="347" y="356" width="1" height="15" fill="#fff"/>
<rect x="347" y="527" width="1" height="15" fill="#fff"/>
<rect x="392" y="356" width="1" height="8" fill="#fff"/>
<rect x="392" y="534" width="1" height="8" fill="#fff"/>
<rect x="438" y="356" width="1" height="8" fill="#fff"/>
<rect x="438" y="534" width="1" height="8" fill="#fff"/>
<rect x="483" y="356" width="1" height="15" fill="#fff"/>
<rect x="483" y="527" width="1" height="15" fill="#fff"/>
<rect x="528" y="356" width="1" height="8" fill="#fff"/>
<rect x="528" y="534" width="1" height="8" fill="#fff"/>
<rect x="574" y="356" width="1" height="8" fill="#fff"/>
<rect x="574" y="534" width="1" height="8" fill="#fff"/>
<line x1="83" y1="374.5" x2="612" y2="374.5" stroke="#fff" stroke-width="1" stroke-dasharray="1 3" shape-rendering="crispEdges"/>
<line x1="83" y1="393.5" x2="612" y2="393.5" stroke="#fff" stroke-width="1" stroke-dasharray="1 3" shape-rendering="crispEdges"/>
<line x1="83" y1="411.5" x2="612" y2="411.5" stroke="#fff" stroke-width="1" stroke-dasharray="1 3" shape-rendering="crispEdges"/>
<line x1="83" y1="430.5" x2="612" y2="430.5" stroke="#fff" stroke-width="1" stroke-dasharray="1 3" shape-rendering="crispEdges"/>
<line x1="83" y1="449.5" x2="612" y2="449.5" stroke="#fff" stroke-width="1" stroke-dasharray="1 3" shape-rendering="crispEdges"/>
<line x1="83" y1="467.5" x2="612" y2="467.5" stroke="#fff" stroke-width="1" stroke-dasharray="1 3" shape-rendering="crispEdges"/>
<line x1="83" y1="486.5" x2="612" y2="486.5" stroke="#fff" stroke-width="1" stroke-dasharray="1 3" shape-rendering="crispEdges"/>
<line x1="83" y1="504.5" x2="612" y2="504.5" stroke="#fff" stroke-width="1" stroke-dasharray="1 3" shape-rendering="crispEdges"/>
<line x1="83" y1="523.5" x2="612" y2="523.5" stroke="#fff" stroke-width="1" stroke-dasharray="1 3" shape-rendering="crispEdges"/>
<rect x="75" y="365" width="4" height="1" fill="#fff"/>
<rect x="616" y="365" width="3" height="1" fill="#fff"/>
<rect x="75" y="374" width="6" height="1" fill="#fff"/>
<rect x="614" y="374" width="5" height="1" fill="#fff"/>
<rect x="75" y="383" width="4" height="1" fill="#fff"/>
<rect x="616" y="383" width="3" height="1" fill="#fff"/>
<rect x="75" y="393" width="6" height="1" fill="#fff"/>
<rect x="614" y="393" width="5" height="1" fill="#fff"/>
<rect x="75" y="402" width="4" height="1" fill="#fff"/>
<rect x="616" y="402" width="3" height="1" fill="#fff"/>
<rect x="75" y="411" width="6" height="1" fill="#fff"/>
<rect x="614" y="411" width="5" height="1" fill="#fff"/>
<rect x="75" y="420" width="4" height="1" fill="#fff"/>
<rect x="616" y="420" width="3" height="1" fill="#fff"/>
<rect x="75" y="430" width="6" height="1" fill="#fff"/>
<rect x="614" y="430" width="5" height="1" fill="#fff"/>
<rect x="75" y="439" width="4" height="1" fill="#fff"/>
<rect x="616" y="439" width="3" height="1" fill="#fff"/>
<rect x="75" y="449" width="6" height="1" fill="#fff"/>
<rect x="614" y="449" width="5" height="1" fill="#fff"/>
<rect x="75" y="458" width="4" height="1" fill="#fff"/>
<rect x="616" y="458" width="3" height="1" fill="#fff"/>
<rect x="75" y="467" width="6" height="1" fill="#fff"/>
<rect x="614" y="467" width="5" height="1" fill="#fff"/>
<rect x="75" y="476" width="4" height="1" fill="#fff"/>
<rect x="616" y="476" width="3" height="1" fill="#fff"/>
<rect x="75" y="486" width="6" height="1" fill="#fff"/>
<rect x="614" y="486" width="5" height="1" fill="#fff"/>
<rect x="75" y="495" width="4" height="1" fill="#fff"/>
<rect x="616" y="495" width="3" height="1" fill="#fff"/>
<rect x="75" y="504" width="6" height="1" fill="#fff"/>
<rect x="614" y="504" width="5" height="1" fill="#fff"/>
<rect x="75" y="514" width="4" height="1" fill="#fff"/>
<rect x="616" y="514" width="3" height="1" fill="#fff"/>
<rect x="75" y="523" width="6" height="1" fill="#fff"/>
<rect x="614" y="523" width="5" height="1" fill="#fff"/>
<rect x="75" y="532" width="4" height="1" fill="#fff"/>
<rect x="616" y="532" width="3" height="1" fill="#fff"/>
<text transform="translate(38.6,494) rotate(-90)" font-size="14.3" fill="#fff" stroke="#fff" stroke-width="0.45" textLength="89" lengthAdjust="spacingAndGlyphs">Cassini Attitude</text>
<text x="62" y="377.3" font-size="10.3" text-anchor="middle" fill="#fff" stroke="#fff" stroke-width="0.55" font-weight="normal" font-style="normal" >180°</text>
<text x="61.5" y="395.8" font-size="10.3" text-anchor="middle" fill="#fff" stroke="#fff" stroke-width="0.55" font-weight="normal" font-style="normal" >0°</text>
<text x="62" y="525.6" font-size="10.3" text-anchor="middle" fill="#fff" stroke="#fff" stroke-width="0.55" font-weight="normal" font-style="normal" >100°</text>
<text x="61.5" y="544.6" font-size="10.3" text-anchor="middle" fill="#fff" stroke="#fff" stroke-width="0.55" font-weight="normal" font-style="normal" >0°</text>
<text x="628.3" y="368.9" font-size="13.3" text-anchor="start" fill="#fff" stroke="#fff" stroke-width="0.5" font-weight="normal" font-style="normal" textLength="61" lengthAdjust="spacingAndGlyphs">Spin/P_CK</text>
<rect x="621" y="357" width="3" height="9" fill="#4eb000"/>
<rect x="621" y="366" width="3" height="10" fill="#ff00ff"/>
<text x="628.3" y="387.4" font-size="13.3" text-anchor="start" fill="#fff" stroke="#fff" stroke-width="0.5" font-weight="normal" font-style="normal" textLength="66" lengthAdjust="spacingAndGlyphs">-X_toSaturn</text>
<rect x="621" y="376" width="3" height="9" fill="#00a8ff"/>
<rect x="621" y="385" width="3" height="9" fill="#ff0000"/>
<text x="628.3" y="405.9" font-size="13.3" text-anchor="start" fill="#fff" stroke="#fff" stroke-width="0.5" font-weight="normal" font-style="normal" textLength="66" lengthAdjust="spacingAndGlyphs">-Y_toSaturn</text>
<rect x="621" y="394" width="3" height="9" fill="#969696"/>
<rect x="621" y="403" width="3" height="9" fill="#ff8c00"/>
<text x="628.3" y="424.4" font-size="13.3" text-anchor="start" fill="#fff" stroke="#fff" stroke-width="0.5" font-weight="normal" font-style="normal" textLength="66" lengthAdjust="spacingAndGlyphs">-Z_toSaturn</text>
<rect x="621" y="412" width="3" height="10" fill="#4eb000"/>
<rect x="621" y="422" width="3" height="9" fill="#ff00ff"/>
<text x="628.3" y="442.9" font-size="13.3" text-anchor="start" fill="#fff" stroke="#fff" stroke-width="0.5" font-weight="normal" font-style="normal" textLength="51.7" lengthAdjust="spacingAndGlyphs">-X_toSun</text>
<rect x="621" y="431" width="3" height="9" fill="#00a8ff"/>
<rect x="621" y="440" width="3" height="10" fill="#ff0000"/>
<text x="628.3" y="461.4" font-size="13.3" text-anchor="start" fill="#fff" stroke="#fff" stroke-width="0.5" font-weight="normal" font-style="normal" textLength="51.7" lengthAdjust="spacingAndGlyphs">-Y_toSun</text>
<rect x="621" y="450" width="3" height="9" fill="#969696"/>
<rect x="621" y="459" width="3" height="9" fill="#ff8c00"/>
<text x="628.3" y="479.9" font-size="13.3" text-anchor="start" fill="#fff" stroke="#fff" stroke-width="0.5" font-weight="normal" font-style="normal" textLength="51.7" lengthAdjust="spacingAndGlyphs">-Z_toSun</text>
<rect x="621" y="468" width="3" height="9" fill="#4eb000"/>
<rect x="621" y="477" width="3" height="9" fill="#ff00ff"/>
<text x="628.3" y="498.4" font-size="13.3" text-anchor="start" fill="#fff" stroke="#fff" stroke-width="0.5" font-weight="normal" font-style="normal" textLength="54.3" lengthAdjust="spacingAndGlyphs">-X_toNEP</text>
<rect x="621" y="486" width="3" height="10" fill="#00a8ff"/>
<rect x="621" y="496" width="3" height="9" fill="#ff0000"/>
<text x="628.3" y="516.9" font-size="13.3" text-anchor="start" fill="#fff" stroke="#fff" stroke-width="0.5" font-weight="normal" font-style="normal" textLength="54.3" lengthAdjust="spacingAndGlyphs">-Y_toNEP</text>
<rect x="621" y="505" width="3" height="9" fill="#969696"/>
<rect x="621" y="514" width="3" height="10" fill="#ff8c00"/>
<text x="628.3" y="535.4" font-size="13.3" text-anchor="start" fill="#fff" stroke="#fff" stroke-width="0.5" font-weight="normal" font-style="normal" textLength="54.3" lengthAdjust="spacingAndGlyphs">-Z_toNEP</text>
<rect x="621" y="524" width="3" height="9" fill="#4eb000"/>
<rect x="621" y="533" width="3" height="9" fill="#ff00ff"/>
<g fill="none" stroke-linejoin="round" shape-rendering="crispEdges">
<rect x="229" y="369" width="20" height="1" fill="#ff00ff"/>
<rect x="547" y="361" width="72" height="1" fill="#4eb000"/>
<rect x="75" y="383" width="16" height="1" fill="#ff0000"/>
<rect x="92" y="383" width="3" height="1" fill="#ff0000"/>
<rect x="95" y="383" width="7" height="1" fill="#00a8ff"/>
<rect x="102" y="383" width="6" height="1" fill="#ff0000"/>
<rect x="108" y="383" width="7" height="1" fill="#00a8ff"/>
<rect x="115" y="383" width="28" height="1" fill="#ff0000"/>
<rect x="143" y="383" width="40" height="1" fill="#00a8ff"/>
<rect x="183" y="383" width="3" height="1" fill="#ff0000"/>
<rect x="186" y="383" width="7" height="1" fill="#00a8ff"/>
<rect x="193" y="383" width="5" height="1" fill="#ff0000"/>
<rect x="199" y="383" width="33" height="1" fill="#00a8ff"/>
<rect x="232" y="383" width="152" height="1" fill="#00a8ff"/>
<rect x="234" y="384" width="3" height="1" fill="#ff0000"/>
<rect x="243" y="384" width="3" height="1" fill="#ff0000"/>
<rect x="252" y="384" width="3" height="1" fill="#ff0000"/>
<rect x="261" y="384" width="3" height="1" fill="#ff0000"/>
<rect x="270" y="384" width="3" height="1" fill="#ff0000"/>
<rect x="75" y="411" width="310" height="3" fill="#ff8c00"/>
<rect x="294" y="410" width="11" height="1" fill="#ff8c00"/>
<rect x="75" y="421" width="309" height="1" fill="#ff00ff"/>
<rect x="75" y="446" width="110" height="1" fill="#ff0000"/>
<rect x="185" y="445" width="111" height="1" fill="#ff0000"/>
<rect x="296" y="444" width="52" height="1" fill="#ff0000"/>
<rect x="348" y="443" width="36" height="1" fill="#ff0000"/>
<rect x="75" y="461" width="20" height="1" fill="#ff8c00"/>
<rect x="95" y="462" width="7" height="1" fill="#ff8c00"/>
<rect x="102" y="461" width="8" height="1" fill="#ff8c00"/>
<rect x="110" y="462" width="3" height="1" fill="#ff8c00"/>
<rect x="113" y="461" width="9" height="1" fill="#ff8c00"/>
<rect x="122" y="462" width="174" height="1" fill="#ff8c00"/>
<rect x="296" y="464" width="14" height="1" fill="#ff8c00"/>
<rect x="310" y="462" width="3" height="1" fill="#ff8c00"/>
<rect x="313" y="464" width="69" height="1" fill="#ff8c00"/>
<rect x="75" y="476" width="310" height="1" fill="#4eb000"/>
<rect x="296" y="477" width="8" height="1" fill="#ff00ff"/>
<rect x="75" y="492" width="20" height="1" fill="#00a8ff"/>
<rect x="95" y="491" width="7" height="1" fill="#00a8ff"/>
<rect x="102" y="492" width="23" height="1" fill="#00a8ff"/>
<rect x="125" y="491" width="189" height="1" fill="#00a8ff"/>
<rect x="314" y="491" width="7" height="1" fill="#00a8ff"/>
<rect x="325" y="491" width="11" height="1" fill="#00a8ff"/>
<rect x="341" y="491" width="11" height="1" fill="#00a8ff"/>
<rect x="357" y="491" width="5" height="1" fill="#00a8ff"/>
<rect x="366" y="491" width="18" height="1" fill="#00a8ff"/>
<rect x="321" y="490" width="4" height="1" fill="#00a8ff"/>
<rect x="336" y="490" width="5" height="1" fill="#00a8ff"/>
<rect x="352" y="490" width="5" height="1" fill="#00a8ff"/>
<rect x="362" y="490" width="4" height="1" fill="#00a8ff"/>
<rect x="75" y="520" width="68" height="1" fill="#ff8c00"/>
<rect x="143" y="519" width="43" height="1" fill="#ff8c00"/>
<rect x="186" y="518" width="7" height="1" fill="#ff8c00"/>
<rect x="193" y="519" width="5" height="1" fill="#ff8c00"/>
<rect x="200" y="518" width="4" height="1" fill="#ff8c00"/>
<rect x="205" y="519" width="29" height="1" fill="#ff8c00"/>
<rect x="234" y="520" width="2" height="1" fill="#ff8c00"/>
<rect x="236" y="519" width="60" height="1" fill="#ff8c00"/>
<rect x="296" y="518" width="8" height="1" fill="#ff8c00"/>
<rect x="304" y="519" width="26" height="1" fill="#ff8c00"/>
<rect x="330" y="518" width="3" height="1" fill="#ff8c00"/>
<rect x="333" y="519" width="4" height="1" fill="#ff8c00"/>
<rect x="337" y="518" width="6" height="1" fill="#ff8c00"/>
<rect x="343" y="519" width="3" height="1" fill="#ff8c00"/>
<rect x="346" y="518" width="38" height="1" fill="#ff8c00"/>
<rect x="75" y="534" width="161" height="1" fill="#ff00ff"/>
<rect x="236" y="535" width="9" height="1" fill="#ff00ff"/>
<rect x="245" y="534" width="11" height="1" fill="#ff00ff"/>
<rect x="256" y="535" width="7" height="1" fill="#ff00ff"/>
<rect x="263" y="534" width="33" height="1" fill="#ff00ff"/>
<rect x="296" y="535" width="8" height="1" fill="#ff00ff"/>
<rect x="304" y="534" width="81" height="1" fill="#ff00ff"/>
<polyline stroke="#ff0000" stroke-width="1.3" points="384,383.5 387.2,386.1 389.1,391.2 391.1,391.9 394.3,389.9 396.2,387.4 399.4,387.4 401.4,390.3 405.9,390.3 409.1,388.6 412.3,386.1 416.1,385.2 420,386.5 423.2,389.5 426.4,390.3 429.6,389.5 432.9,387.4 434.1,389.5 438,390.3 439.3,388.6 441.9,388.6 445.1,390.3 447,389.5 448.3,387.4"/>
<polyline stroke="#ff8c00" stroke-width="1" points="385.3,409.9 387.2,408.6 389.1,405.4 391.7,402.8 393,401.6"/>
<polyline stroke="#969696" stroke-width="1" points="393,401.5 399.4,401.2 402,399.6 405.9,399.3 409.1,400.9 411.4,402.4"/>
<polyline stroke="#ff8c00" stroke-width="1" points="411.4,402.4 413.6,404.7 416.1,405.4 419.4,404.1 422.3,401.5"/>
<polyline stroke="#969696" stroke-width="1" points="422.3,401.5 425.8,398.5 428.4,398.5 430.9,400.2 432.9,401.5 436.1,399.6 438.6,399.8 440.6,400.6 443.8,399.6 446.4,399.8 448.3,401.2"/>
<polyline stroke="#4eb000" stroke-width="1" points="384,420.5 389.8,420.5"/>
<polyline stroke="#ff00ff" stroke-width="1.2" points="389.8,420.8 394.9,426.6 395.6,427.5 399.4,427.5 400.7,425.3 404.8,421.2"/>
<polyline stroke="#4eb000" stroke-width="1" points="404.8,421.2 409.1,416.5 422.6,416.5 427.1,420.8"/>
<polyline stroke="#ff00ff" stroke-width="1.2" points="427.7,421.2 431.6,425.9 432.2,427.5 433.5,427.5 434.8,424 436.1,422.1"/>
<polyline stroke="#4eb000" stroke-width="1" points="437.1,420.4 439.9,416.5 442.5,416.5 445.5,420.4"/>
<polyline stroke="#ff00ff" stroke-width="1.2" points="446,421.4 447.6,424 448.3,427.5"/>
<polyline stroke="#ff0000" stroke-width="1.4" points="384,443.5 385.3,445.9 387.9,448.7 389.8,445.9 391.7,443.3 395.8,439.4"/>
<polyline stroke="#00a8ff" stroke-width="1" points="395.8,439.4 399,439.4"/>
<polyline stroke="#ff0000" stroke-width="1.2" points="399,439.7 402.6,441.7 405.9,442.6 409.1,442.6 412.3,441 416.1,440.1 419.4,441 422.6,442.3 425.8,442.3 429,441 432.9,439.4 434.8,441.4 438,443.3 441.9,443.5 445.7,443.3 447.6,440.7 448.9,439.4"/>
<polyline stroke="#ff8c00" stroke-width="1" points="382.1,464.3 384.6,463.4 386.6,460.8 389.4,457.6"/>
<polyline stroke="#969696" stroke-width="1.2" points="389.4,457.6 390.4,457.3 399.4,457.1 402.6,453.8 405.9,451.9 409.1,453.8 412.3,455.8 415.5,457.3 418.7,455.5 421.9,453.2 424.5,451.9 427.7,453.2 430.9,455.5 434.1,457.3 437.4,453.8 440.6,452.9 445.1,452.9 447,455.8 448.9,457.3"/>
<polyline stroke="#ff00ff" stroke-width="1.6" points="385.3,475.8 389.1,479.4 391.1,483.3 394.3,485.6 395.6,487.1 399.4,487.1 402,483.9 403.9,481.4 406.8,477.9"/>
<polyline stroke="#4eb000" stroke-width="1.2" points="406.8,477.9 409.7,472.4 412.3,469.8 415.5,468.9 418.7,469.8 421.3,472.4 424.5,476.2"/>
<polyline stroke="#ff00ff" stroke-width="1.6" points="424.5,476.2 427.7,480.7 430.3,483.9 432.2,487.1 433.5,487.1 435.2,483.5"/>
<polyline stroke="#ff00ff" stroke-width="1.2" points="437.1,479.7 438.9,477.1"/>
<polyline stroke="#4eb000" stroke-width="1" points="438.9,477.1 441.2,474.9 443.4,476.6"/>
<polyline stroke="#ff00ff" stroke-width="1.2" points="443.4,476.6 446,479.7"/>
<polyline stroke="#ff00ff" stroke-width="1.6" points="446.1,483.5 448.5,485.9"/>
<polyline stroke="#00a8ff" stroke-width="1" points="384,491 385,491.3 387.2,492.9 388.8,495.1"/>
<polyline stroke="#ff0000" stroke-width="1" points="388.8,495.1 391.7,500"/>
<polyline stroke="#ff0000" stroke-width="1.8" points="391.5,502.3 394.3,504.5 395.6,506.2 400.7,506.2 402.6,503.9 406.5,501.9 409.7,499.7 413.6,499.1 421.3,499.1 424.5,501.3 427.7,502.6 430.3,503.9 431.6,506.2 433.5,506.2 435.4,503.2 438,500.6 439.3,498.7 441.2,498.1 443.1,498.7 445.1,501.3 447,503.2 448.5,504.9"/>
<polyline stroke="#ff8c00" stroke-width="1.2" points="384,517.7 384.6,518 385.9,521.2 387.9,522.8 389.8,520.6 391.7,517.4 394.3,514.8 397.5,514.1 403.3,514.1 406.5,516.1 409.7,518.6 412.9,520.3 420,520.3 423.2,518 426.4,515.4 429.6,514.4 434.1,514.4 437.4,516.1 439.3,517.6 441.2,517.6 443.8,516.1 446.4,514.8 448,514.4"/>
<polyline stroke="#ff00ff" stroke-width="1" points="384.6,534.1 386.6,532.9"/>
<polyline stroke="#4eb000" stroke-width="1" points="386.6,532.9 389.1,530.6 391.7,530.2 394.3,531.9 396.2,532.5 399.4,532.5 402,530.9 405.9,530.2 409.1,530.9 412.3,532.1 415.5,532.5 418.7,532.5 421.9,530.9 425.8,530.2 429,530.9 432.9,532.5 434.8,530.9 436.1,528.5 438,528.3 443.8,528.3 445.7,528.9 447.6,531.5 448.9,532.5"/>
<rect x="448" y="387" width="88" height="1" fill="#ff0000"/>
<rect x="448" y="401" width="89" height="1" fill="#969696"/>
<rect x="448" y="427" width="82" height="1" fill="#ff00ff"/>
<rect x="530" y="428" width="89" height="1" fill="#ff00ff"/>
<rect x="448" y="439" width="171" height="1" fill="#00a8ff"/>
<rect x="448" y="457" width="91" height="1" fill="#969696"/>
<rect x="448" y="485" width="171" height="3" fill="#ff00ff"/>
<rect x="448" y="504" width="90" height="3" fill="#ff0000"/>
<rect x="448" y="514" width="88" height="1" fill="#969696"/>
<rect x="448" y="532" width="171" height="1" fill="#4eb000"/>
<polyline stroke="#ff0000" stroke-width="1" points="536,387.5 539.5,386"/>
<polyline stroke="#00a8ff" stroke-width="1" points="539.5,384.1 540.3,382.8 541.1,381.8 541.9,381 542.7,380.6 543.5,380.7 544.3,381.3 545.1,382.3 545.9,383.4 546.7,384.7"/>
<polyline stroke="#ff0000" stroke-width="1" points="546.7,384.7 547.5,385.8 548.3,386.5 549.1,386.9 549.9,386.8 550.7,386.2 551.5,385.2 552.3,384"/>
<polyline stroke="#00a8ff" stroke-width="1" points="552.3,384 553.1,382.8 553.9,381.7 554.7,381 555.5,380.6 556.3,380.7 557.1,381.3 557.9,382.3 558.7,383.5 559.5,384.7"/>
<polyline stroke="#ff0000" stroke-width="1" points="559.5,384.7 560.3,385.8 561.1,386.5 561.9,386.9 562.7,386.8 563.5,386.2 564.3,385.2 565.1,384"/>
<polyline stroke="#00a8ff" stroke-width="1" points="565.1,384 565.9,382.8 566.7,381.7 567.5,380.9 568.3,380.6 569.1,380.8 569.9,381.3 570.7,382.3 571.5,383.5 572.3,384.7"/>
<polyline stroke="#ff0000" stroke-width="1" points="572.3,384.7 573.1,385.8 573.9,386.6 574.7,386.9 575.5,386.7 576.3,386.1 577.1,385.2 577.9,384"/>
<polyline stroke="#00a8ff" stroke-width="1" points="577.9,384 578.7,382.8 579.5,381.7 580.3,380.9 581.1,380.6 581.9,380.8 582.7,381.4 583.5,382.3 584.3,383.5 585.1,384.7"/>
<polyline stroke="#ff0000" stroke-width="1" points="585.1,384.7 585.9,385.8 586.7,386.6 587.5,386.9 588.3,386.7 589.1,386.1 589.9,385.2 590.7,384"/>
<polyline stroke="#00a8ff" stroke-width="1" points="590.7,384 591.5,382.7 592.3,381.7 593.1,380.9 593.9,380.6 594.7,380.8 595.5,381.4 596.3,382.4 597.1,383.6 597.9,384.8"/>
<polyline stroke="#ff0000" stroke-width="1" points="597.9,384.8 598.7,385.8 599.5,386.6 600.3,386.9 601.1,386.7 601.9,386.1 602.7,385.1 603.5,383.9"/>
<polyline stroke="#00a8ff" stroke-width="1" points="603.5,383.9 604.3,382.7 605.1,381.7 605.9,380.9 606.7,380.6 607.5,380.8 608.3,381.4 609.1,382.4 609.9,383.6 610.7,384.8"/>
<polyline stroke="#ff0000" stroke-width="1" points="610.7,384.8 611.5,385.9 612.3,386.6 613.1,386.9 613.9,386.7 614.7,386.1 615.5,385.1 616.3,383.9"/>
<polyline stroke="#00a8ff" stroke-width="1" points="616.3,383.9 617.1,382.7 617.9,381.6 618.7,380.9"/>
<polyline stroke="#969696" stroke-width="1" points="537,402.3 537.8,401.2 538.6,400.2 539.4,399.5 540.2,399.3 541,399.5 541.8,400.2 542.6,401.2 543.4,402.3 544.2,403.5"/>
<polyline stroke="#ff8c00" stroke-width="1" points="544.2,403.5 545,404.5 545.8,405.1 546.6,405.4 547.4,405.2 548.2,404.6 549,403.6 549.8,402.4"/>
<polyline stroke="#969696" stroke-width="1" points="549.8,402.4 550.6,401.3 551.4,400.3 552.2,399.6 553,399.3 553.8,399.5 554.6,400.1 555.4,401 556.2,402.2 557,403.4"/>
<polyline stroke="#ff8c00" stroke-width="1" points="557,403.4 557.8,404.4 558.6,405.1 559.4,405.4 560.2,405.2 561,404.6 561.8,403.7 562.6,402.6"/>
<polyline stroke="#969696" stroke-width="1" points="562.6,402.6 563.4,401.4 564.2,400.4 565,399.6 565.8,399.3 566.6,399.4 567.4,400 568.2,400.9 569,402.1 569.8,403.2"/>
<polyline stroke="#ff8c00" stroke-width="1" points="569.8,403.2 570.6,404.3 571.4,405 572.2,405.4 573,405.3 573.8,404.7 574.6,403.8 575.4,402.7 576.2,401.5"/>
<polyline stroke="#969696" stroke-width="1" points="576.2,401.5 577,400.5 577.8,399.7 578.6,399.3 579.4,399.4 580.2,399.9 581,400.8 581.8,401.9 582.6,403.1"/>
<polyline stroke="#ff8c00" stroke-width="1" points="582.6,403.1 583.4,404.2 584.2,405 585,405.4 585.8,405.3 586.6,404.8 587.4,403.9 588.2,402.8 589,401.6"/>
<polyline stroke="#969696" stroke-width="1" points="589,401.6 589.8,400.6 590.6,399.8 591.4,399.3 592.2,399.4 593,399.9 593.8,400.7 594.6,401.8 595.4,403"/>
<polyline stroke="#ff8c00" stroke-width="1" points="595.4,403 596.2,404.1 597,404.9 597.8,405.3 598.6,405.3 599.4,404.9 600.2,404 601,402.9 601.8,401.8"/>
<polyline stroke="#969696" stroke-width="1" points="601.8,401.8 602.6,400.7 603.4,399.8 604.2,399.4 605,399.4 605.8,399.8 606.6,400.6 607.4,401.7 608.2,402.9"/>
<polyline stroke="#ff8c00" stroke-width="1" points="608.2,402.9 609,404 609.8,404.8 610.6,405.3 611.4,405.4 612.2,404.9 613,404.1 613.8,403.1 614.6,401.9"/>
<polyline stroke="#969696" stroke-width="1" points="614.6,401.9 615.4,400.8 616.2,399.9 617,399.4 617.8,399.3 618.6,399.7"/>
<rect x="544" y="440" width="5" height="1" fill="#ff0000"/>
<rect x="544" y="439" width="5" height="1" fill="#000"/>
<rect x="543" y="439" width="1" height="1" fill="#ff0000"/>
<rect x="549" y="439" width="1" height="1" fill="#ff0000"/>
<rect x="557" y="440" width="5" height="1" fill="#ff0000"/>
<rect x="557" y="439" width="5" height="1" fill="#000"/>
<rect x="556" y="439" width="1" height="1" fill="#ff0000"/>
<rect x="562" y="439" width="1" height="1" fill="#ff0000"/>
<rect x="570" y="440" width="5" height="1" fill="#ff0000"/>
<rect x="570" y="439" width="5" height="1" fill="#000"/>
<rect x="569" y="439" width="1" height="1" fill="#ff0000"/>
<rect x="575" y="439" width="1" height="1" fill="#ff0000"/>
<rect x="583" y="440" width="5" height="1" fill="#ff0000"/>
<rect x="583" y="439" width="5" height="1" fill="#000"/>
<rect x="582" y="439" width="1" height="1" fill="#ff0000"/>
<rect x="588" y="439" width="1" height="1" fill="#ff0000"/>
<rect x="596" y="440" width="5" height="1" fill="#ff0000"/>
<rect x="596" y="439" width="5" height="1" fill="#000"/>
<rect x="595" y="439" width="1" height="1" fill="#ff0000"/>
<rect x="601" y="439" width="1" height="1" fill="#ff0000"/>
<rect x="609" y="440" width="5" height="1" fill="#ff0000"/>
<rect x="609" y="439" width="5" height="1" fill="#000"/>
<rect x="608" y="439" width="1" height="1" fill="#ff0000"/>
<rect x="614" y="439" width="1" height="1" fill="#ff0000"/>
<rect x="539" y="457" width="80" height="1" fill="#969696"/>
<rect x="540" y="457" width="5" height="1" fill="#000"/>
<rect x="540" y="458" width="5" height="1" fill="#ff8c00"/>
<rect x="553" y="457" width="7" height="1" fill="#000"/>
<rect x="553" y="458" width="7" height="1" fill="#ff8c00"/>
<rect x="566" y="457" width="7" height="1" fill="#000"/>
<rect x="566" y="458" width="7" height="1" fill="#ff8c00"/>
<rect x="578" y="457" width="7" height="1" fill="#000"/>
<rect x="578" y="458" width="7" height="1" fill="#ff8c00"/>
<rect x="591" y="457" width="8" height="1" fill="#000"/>
<rect x="591" y="458" width="8" height="1" fill="#ff8c00"/>
<rect x="604" y="457" width="7" height="1" fill="#000"/>
<rect x="604" y="458" width="7" height="1" fill="#ff8c00"/>
<rect x="616" y="457" width="3" height="1" fill="#000"/>
<rect x="616" y="458" width="3" height="1" fill="#ff8c00"/>
<polyline stroke="#ff0000" stroke-width="1.3" points="539.5,499.5 540.9,496.1"/>
<polyline stroke="#ff0000" stroke-width="1.3" points="547,495.5 548.3,499.5"/>
<polyline stroke="#00a8ff" stroke-width="1.3" points="553.1,494.8 555.8,488.7 557.1,489.4 559.2,494.1"/>
<polyline stroke="#00a8ff" stroke-width="1.3" points="566.4,495.5 567.7,492.1"/>
<polyline stroke="#ff0000" stroke-width="1.3" points="573.4,496.8 574.8,499.5"/>
<polyline stroke="#ff0000" stroke-width="1.3" points="576.8,499.5 578.6,496.1"/>
<polyline stroke="#ff0000" stroke-width="1.3" points="575.1,504.3 576.8,504.3"/>
<polyline stroke="#00a8ff" stroke-width="1.3" points="584.3,492.1 585.6,495.5"/>
<polyline stroke="#00a8ff" stroke-width="1.3" points="592.4,494.8 594.5,488.7 596.5,490 598.5,494.1"/>
<polyline stroke="#ff0000" stroke-width="1.3" points="603.3,499.5 604.6,495.5"/>
<polyline stroke="#ff0000" stroke-width="1.3" points="611.2,496.1 612.8,499.5"/>
<polyline stroke="#ff0000" stroke-width="1.3" points="612.1,503.6 614.8,502.9 616.2,500.9"/>
<polyline stroke="#969696" stroke-width="1.3" points="530,514.5 536.1,514.1 538.8,511.3"/>
<polyline stroke="#969696" stroke-width="1.3" points="541.9,510.4 543.6,513.8"/>
<polyline stroke="#969696" stroke-width="1.3" points="550.4,513.8 551.7,510.4 552.4,507.7 555.1,509.7"/>
<polyline stroke="#ff8c00" stroke-width="1.3" points="561.2,517.9 562.6,514.5"/>
<polyline stroke="#ff8c00" stroke-width="1.3" points="569.1,514.5 570.7,517.9"/>
<polyline stroke="#ff8c00" stroke-width="1.3" points="571.4,523.3 573.4,522.6 574.1,519.2"/>
<polyline stroke="#969696" stroke-width="1.3" points="576.1,509.7 578.2,506.3 579.5,507"/>
<polyline stroke="#969696" stroke-width="1.3" points="580.9,510.4 582.7,513.8"/>
<polyline stroke="#969696" stroke-width="1.3" points="589,513.8 590.7,510.4"/>
<polyline stroke="#ff8c00" stroke-width="1.3" points="595.1,519.2 597.2,522.6 599.2,523.3"/>
<polyline stroke="#ff8c00" stroke-width="1.3" points="599.9,517.9 601.7,514.5"/>
<polyline stroke="#ff8c00" stroke-width="1.3" points="608,514.5 609.8,517.9"/>
<polyline stroke="#969696" stroke-width="1.3" points="615.2,513.1 616.9,508.4 618.2,507"/>
</g>
<text x="75" y="566" font-size="12.6" text-anchor="middle" fill="#fff" stroke="#fff" stroke-width="0.55" font-weight="normal" font-style="normal" >00:00</text>
<text x="212" y="566" font-size="12.6" text-anchor="middle" fill="#fff" stroke="#fff" stroke-width="0.55" font-weight="normal" font-style="normal" >06:00</text>
<text x="348" y="566" font-size="12.6" text-anchor="middle" fill="#fff" stroke="#fff" stroke-width="0.55" font-weight="normal" font-style="normal" >12:00</text>
<text x="484" y="566" font-size="12.6" text-anchor="middle" fill="#fff" stroke="#fff" stroke-width="0.55" font-weight="normal" font-style="normal" >18:00</text>
<text x="75" y="597" font-size="12.6" text-anchor="middle" fill="#fff" stroke="#fff" stroke-width="0.55" font-weight="normal" font-style="normal" >18.00</text>
<text x="212" y="597" font-size="12.6" text-anchor="middle" fill="#fff" stroke="#fff" stroke-width="0.55" font-weight="normal" font-style="normal" >16.72</text>
<text x="348" y="597" font-size="12.6" text-anchor="middle" fill="#fff" stroke="#fff" stroke-width="0.55" font-weight="normal" font-style="normal" >15.35</text>
<text x="484" y="597" font-size="12.6" text-anchor="middle" fill="#fff" stroke="#fff" stroke-width="0.55" font-weight="normal" font-style="normal" >13.91</text>
<text x="75" y="612.5" font-size="12.6" text-anchor="middle" fill="#fff" stroke="#fff" stroke-width="0.55" font-weight="normal" font-style="normal" >-52.14</text>
<text x="212" y="612.5" font-size="12.6" text-anchor="middle" fill="#fff" stroke="#fff" stroke-width="0.55" font-weight="normal" font-style="normal" >-50.65</text>
<text x="348" y="612.5" font-size="12.6" text-anchor="middle" fill="#fff" stroke="#fff" stroke-width="0.55" font-weight="normal" font-style="normal" >-48.06</text>
<text x="484" y="612.5" font-size="12.6" text-anchor="middle" fill="#fff" stroke="#fff" stroke-width="0.55" font-weight="normal" font-style="normal" >-43.97</text>
<text x="75" y="628" font-size="12.6" text-anchor="middle" fill="#fff" stroke="#fff" stroke-width="0.55" font-weight="normal" font-style="normal" >2014</text>
<text x="212" y="628" font-size="12.6" text-anchor="middle" fill="#fff" stroke="#fff" stroke-width="0.55" font-weight="normal" font-style="normal" >2051</text>
<text x="348" y="628" font-size="12.6" text-anchor="middle" fill="#fff" stroke="#fff" stroke-width="0.55" font-weight="normal" font-style="normal" >2130</text>
<text x="484" y="628" font-size="12.6" text-anchor="middle" fill="#fff" stroke="#fff" stroke-width="0.55" font-weight="normal" font-style="normal" >2211</text>
<text x="75" y="643.5" font-size="12.6" text-anchor="middle" fill="#fff" stroke="#fff" stroke-width="0.55" font-weight="normal" font-style="normal" >47.80</text>
<text x="212" y="643.5" font-size="12.6" text-anchor="middle" fill="#fff" stroke="#fff" stroke-width="0.55" font-weight="normal" font-style="normal" >41.59</text>
<text x="348" y="643.5" font-size="12.6" text-anchor="middle" fill="#fff" stroke="#fff" stroke-width="0.55" font-weight="normal" font-style="normal" >34.37</text>
<text x="484" y="643.5" font-size="12.6" text-anchor="middle" fill="#fff" stroke="#fff" stroke-width="0.55" font-weight="normal" font-style="normal" >26.85</text>
<text x="8" y="574" font-size="12" text-anchor="start" fill="#fff" stroke="#fff" stroke-width="0.55" font-weight="normal" font-style="normal" >UTC</text>
<text x="8" y="605" font-size="12" text-anchor="start" fill="#fff" stroke="#fff" stroke-width="0.55" font-weight="normal" font-style="normal" >R</text>
<text x="17" y="614" font-size="12.4" text-anchor="start" fill="#fff" stroke="#fff" stroke-width="0.55" font-weight="normal" font-style="normal" >satur</text>
<text x="8" y="621" font-size="12" text-anchor="start" fill="#fff" stroke="#fff" stroke-width="0.55" font-weight="normal" font-style="normal" >Lat</text>
<text x="8" y="636" font-size="12.4" text-anchor="start" fill="#fff" stroke="#fff" stroke-width="0.55" font-weight="normal" font-style="normal" >LT</text>
<text x="8" y="652" font-size="12" text-anchor="start" fill="#fff" stroke="#fff" stroke-width="0.55" font-weight="normal" font-style="normal" >L</text>
<text x="15" y="661" font-size="12.4" text-anchor="start" fill="#fff" stroke="#fff" stroke-width="0.55" font-weight="normal" font-style="normal" >saturn</text>
<text x="319" y="688" font-size="10.8" text-anchor="start" fill="#fff" stroke="#fff" stroke-width="0.55" font-weight="normal" font-style="normal" >Background Subtracted</text>
<text x="568" y="688" font-size="10.8" text-anchor="start" fill="#fff" stroke="#fff" stroke-width="0.55" font-weight="normal" font-style="normal" >in Stare Mode</text>
</svg>
</body></html>
